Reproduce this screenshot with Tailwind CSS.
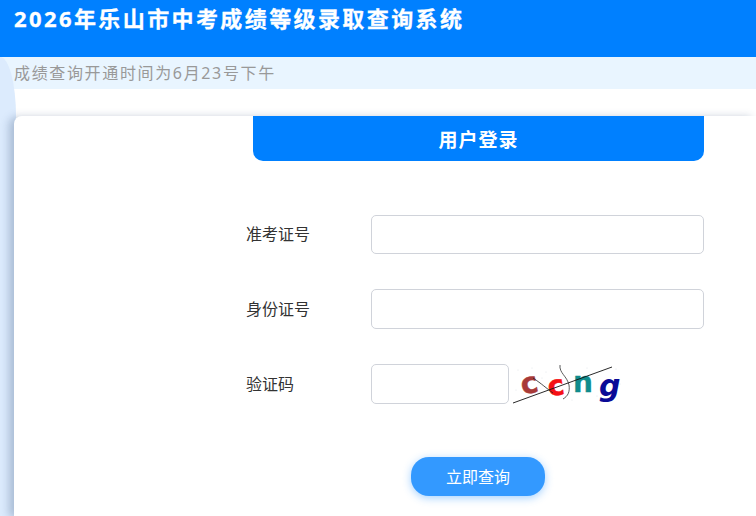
<!DOCTYPE html>
<html lang="zh">
<head>
<meta charset="utf-8">
<script src="https://cdn.jsdelivr.net/npm/@tailwindcss/browser@4"></script>
</head>
<body class="relative w-[756px] h-[516px] overflow-hidden bg-white font-['Noto_Sans','Noto_Sans_CJK_SC',sans-serif]">
<header class="h-[57px] bg-[#0080ff] pl-[14px]">
  <h1 class="text-[22px] leading-[36px] font-bold tracking-[2.4px] text-white [-webkit-text-stroke:0.3px_white]">2026年乐山市中考成绩等级录取查询系统</h1>
</header>
<div class="h-[32px] bg-[#e9f5ff] pl-[14px] text-[16px] leading-[32px] tracking-[1.65px] text-[#999999]">成绩查询开通时间为6月23号下午</div>
<div class="absolute left-0 top-[57px] h-[459px] w-[16px] rounded-tr-[16px_59px] bg-[#dcebfd]"></div>
<main class="relative z-10 ml-[14px] pt-[27px]">
  <section class="h-[400px] rounded-tl-[8px] bg-white shadow-[-5px_1px_9px_rgba(40,70,110,0.28)]">
    <h2 class="ml-[239px] h-[45px] w-[451px] rounded-b-[10px] bg-[#0080ff] text-center text-[19px] leading-[48px] font-bold tracking-[1px] text-white">用户登录</h2>
    <form class="ml-[232px] mt-[54px] flex w-[458px] flex-col gap-[35px] text-[16px] text-[#333333]">
      <div class="flex h-[39px] items-center">
        <label class="w-[125px] pb-[2px]">准考证号</label>
        <input class="h-full w-[333px] rounded-[5px] border border-[#d0d3da] bg-white" type="text">
      </div>
      <div class="flex h-[40px] items-center">
        <label class="w-[125px]">身份证号</label>
        <input class="h-full w-[333px] rounded-[5px] border border-[#d0d3da] bg-white" type="text">
      </div>
      <div class="flex h-[40px] items-center">
        <label class="w-[125px]">验证码</label>
        <input class="h-full w-[138px] rounded-[5px] border border-[#d0d3da] bg-white" type="text">
        <svg class="ml-[3px]" width="110" height="40" viewBox="0 0 110 40" font-family="'DejaVu Sans',sans-serif" font-weight="bold">
          <g fill="#dfe3e8">
            <circle cx="6" cy="6" r=".6"/><circle cx="20" cy="4" r=".6"/><circle cx="34" cy="8" r=".6"/><circle cx="48" cy="3" r=".6"/><circle cx="75" cy="4" r=".6"/><circle cx="90" cy="7" r=".6"/><circle cx="104" cy="5" r=".6"/><circle cx="108" cy="20" r=".6"/><circle cx="4" cy="26" r=".6"/><circle cx="60" cy="36" r=".6"/><circle cx="85" cy="32" r=".6"/><circle cx="30" cy="14" r=".6"/>
          </g>
          <text x="9" y="29" font-size="29" stroke="#a83a38" stroke-width=".5" fill="#a83a38" transform="rotate(-12 18 22)">c</text>
          <text x="36" y="31" font-size="28" stroke="#f50f14" stroke-width=".5" fill="#f50f14" transform="rotate(-8 45 25)">c</text>
          <text x="61" y="28" font-size="28" stroke="#108c8c" stroke-width=".3" fill="#108c8c">n</text>
          <text x="87" y="32" font-size="30" font-style="italic" fill="#0a0a96">g</text>
          <path d="M1 39 L100 3" fill="none" stroke="#111" stroke-width=".9"/>
          <path d="M21 14 C30 20 34 24 41 29" fill="none" stroke="#222" stroke-width=".8"/>
          <path d="M48 1 C47 9 55 12 57 21 C58 28 56 32 51 35" fill="none" stroke="#333" stroke-width=".8"/>
        </svg>
      </div>
      <button class="ml-[165px] mt-[18px] h-[39px] w-[134px] rounded-[18px] bg-[#3399ff] text-center text-[16px] text-white shadow-[0_2px_8px_rgba(51,153,255,0.45)]" type="button">立即查询</button>
    </form>
  </section>
</main>
</body>
</html>
